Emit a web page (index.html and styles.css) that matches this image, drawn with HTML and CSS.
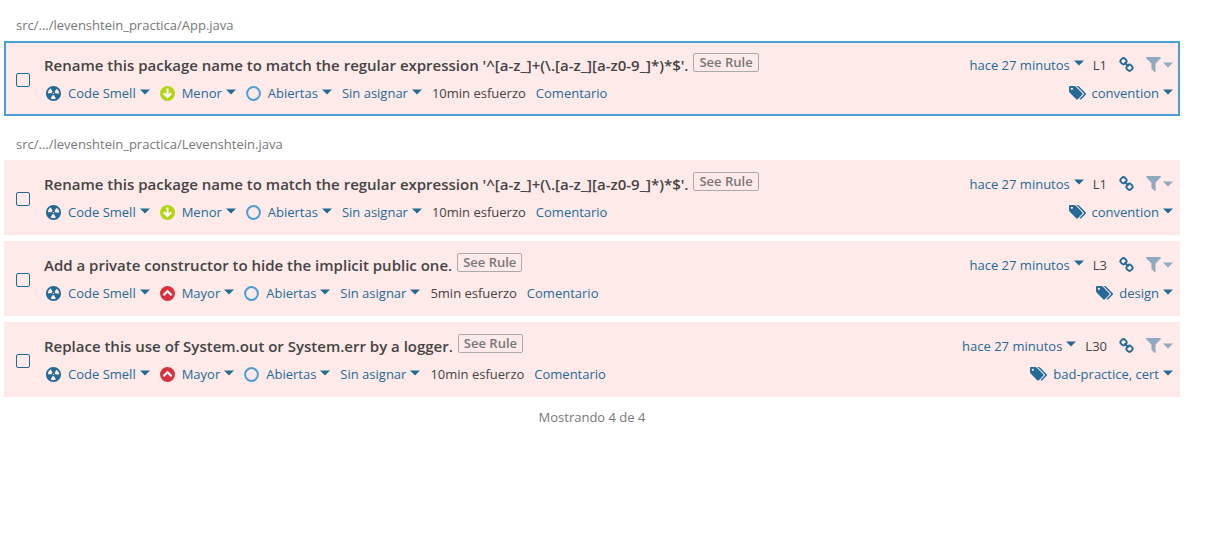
FILE: index.html
```html
<!DOCTYPE html>
<html lang="es">
<head>
<meta charset="utf-8">
<title>Issues</title>
<link rel="stylesheet" href="styles.css">
</head>
<body>
<svg class="sprite" aria-hidden="true">
  <symbol id="smell" viewBox="2 2 12 12"><path d="M8 2C4.7 2 2 4.7 2 8s2.7 6 6 6 6-2.7 6-6-2.7-6-6-6zm-.5 5.5h.9v.9h-.9v-.9zm-3.8.2c-.1 0-.2-.1-.2-.2 0-.4.1-1.2.6-2S5.300 4.200 5.600 4c.2 0 .3 0 .3.1l1.300 2.300c0 .1 0 .2-.1.2-.1.2-.2.3-.3.5-.1.2-.2.4-.2.5 0 .1-.1.2-.2.2l-2.700-.1zM9.900 12c-.3.2-1.100.5-2 .5-.9 0-1.700-.3-2-.5-.1 0-.1-.2-.1-.3l1.300-2.300c0-.1.1-.1.2-.1.2.1.3.1.5.1s.4 0 .5-.1c.1 0 .2 0 .2.1l1.300 2.300c.2.2.2.3.1.3zm2.500-4.100L9.700 8c-.1 0-.2-.1-.2-.2 0-.2-.1-.4-.2-.5 0-.1-.2-.3-.3-.4-.1 0-.1-.1-.1-.2l1.300-2.300c.1-.1.2-.1.3-.1.3.2 1 .7 1.500 1.500s.6 1.600.6 2c0 0-.1.1-.2.1z"/></symbol>
  <symbol id="minor" viewBox="0 0 15 15"><circle cx="7.500" cy="7.500" r="7.500" fill="#b0d513"/><path d="M7.500 2.500v8.500M3.800 7.300l3.700 3.700 3.700-3.700" fill="none" stroke="#fff" stroke-width="2"/></symbol>
  <symbol id="major" viewBox="0 0 15 15"><circle cx="7.500" cy="7.500" r="7.500" fill="#d4333f"/><path d="M3.400 9.300l4.100-4 4.100 4" fill="none" stroke="#fff" stroke-width="2.200"/></symbol>
  <symbol id="open" viewBox="0 0 15 15"><circle cx="7.500" cy="7.500" r="6.400" fill="none" stroke="#4b9fd5" stroke-width="2"/></symbol>
  <symbol id="caret" viewBox="0 0 10 6"><path d="M0 .5h10L5 5.500z"/></symbol>
  <symbol id="link" viewBox="0 0 16 16"><g fill="none" stroke="currentColor" stroke-width="2"><rect x="1.800" y="1.500" width="6" height="6" rx="2.400" transform="rotate(45 4.800 4.500)"/><rect x="8.200" y="8.500" width="6" height="6" rx="2.400" transform="rotate(45 11.200 11.500)"/><path d="M5.800 5.800l4.400 4.400"/></g></symbol>
  <symbol id="filter" viewBox="190 256 1412 1408"><path d="M1595 295q17 41-14 70l-493 493v742q0 42-39 59-13 5-25 5-27 0-45-19l-256-256q-19-19-19-45v-486l-493-493q-31-29-14-70 17-39 59-39h1280q42 0 59 39z"/></symbol>
  <symbol id="tags" viewBox="0 192 1899 1451"><path d="M448 448q0-53-37.500-90.500t-90.500-37.500-90.500 37.500-37.500 90.500 37.500 90.500 90.500 37.500 90.500-37.500 37.500-90.500zm1067 576q0 53-37 90l-491 492q-39 37-91 37-53 0-90-37l-715-716q-38-37-64.500-101t-26.500-117v-416q0-52 38-90t90-38h416q53 0 117 26.500t102 64.500l715 714q37 39 37 91zm384 0q0 53-37 90l-491 492q-39 37-91 37-36 0-59-14t-53-45l470-470q37-37 37-90 0-52-37-91l-715-714q-38-38-102-64.500t-117-26.500h224q53 0 117 26.500t102 64.500l715 714q37 39 37 91z"/></symbol>
</svg>
<main class="issues">
  <h2 class="path">src/.../levenshtein_practica/App.java</h2>
  <article class="issue selected">
    <input class="check" type="checkbox" aria-label="Rename this package name">
    <div class="body">
      <div class="row">
        <h3 class="title">Rename this package name to match the regular expression '^[a-z_]+(\.[a-z_][a-z0-9_]*)*$'.</h3>
        <button class="rule">See Rule</button>
        <div class="side">
          <button class="action">hace 27 minutos<svg class="caret"><use href="#caret"/></svg></button>
          <span class="line">L1</span>
          <a class="permalink" href="#" aria-label="Enlace"><svg class="icon"><use href="#link"/></svg></a>
          <button class="action filter" aria-label="Filtrar"><svg class="icon"><use href="#filter"/></svg><svg class="caret"><use href="#caret"/></svg></button>
        </div>
      </div>
      <div class="row meta">
        <button class="action"><svg class="icon"><use href="#smell"/></svg>Code Smell<svg class="caret"><use href="#caret"/></svg></button>
        <button class="action"><svg class="icon"><use href="#minor"/></svg>Menor<svg class="caret"><use href="#caret"/></svg></button>
        <button class="action"><svg class="icon"><use href="#open"/></svg>Abiertas<svg class="caret"><use href="#caret"/></svg></button>
        <button class="action">Sin asignar<svg class="caret"><use href="#caret"/></svg></button>
        <span class="effort">10min esfuerzo</span>
        <button class="action">Comentario</button>
        <div class="side"><button class="action"><svg class="icon tags"><use href="#tags"/></svg>convention<svg class="caret"><use href="#caret"/></svg></button></div>
      </div>
    </div>
  </article>

  <h2 class="path">src/.../levenshtein_practica/Levenshtein.java</h2>
  <article class="issue">
    <input class="check" type="checkbox" aria-label="Rename this package name">
    <div class="body">
      <div class="row">
        <h3 class="title">Rename this package name to match the regular expression '^[a-z_]+(\.[a-z_][a-z0-9_]*)*$'.</h3>
        <button class="rule">See Rule</button>
        <div class="side">
          <button class="action">hace 27 minutos<svg class="caret"><use href="#caret"/></svg></button>
          <span class="line">L1</span>
          <a class="permalink" href="#" aria-label="Enlace"><svg class="icon"><use href="#link"/></svg></a>
          <button class="action filter" aria-label="Filtrar"><svg class="icon"><use href="#filter"/></svg><svg class="caret"><use href="#caret"/></svg></button>
        </div>
      </div>
      <div class="row meta">
        <button class="action"><svg class="icon"><use href="#smell"/></svg>Code Smell<svg class="caret"><use href="#caret"/></svg></button>
        <button class="action"><svg class="icon"><use href="#minor"/></svg>Menor<svg class="caret"><use href="#caret"/></svg></button>
        <button class="action"><svg class="icon"><use href="#open"/></svg>Abiertas<svg class="caret"><use href="#caret"/></svg></button>
        <button class="action">Sin asignar<svg class="caret"><use href="#caret"/></svg></button>
        <span class="effort">10min esfuerzo</span>
        <button class="action">Comentario</button>
        <div class="side"><button class="action"><svg class="icon tags"><use href="#tags"/></svg>convention<svg class="caret"><use href="#caret"/></svg></button></div>
      </div>
    </div>
  </article>
  <article class="issue">
    <input class="check" type="checkbox" aria-label="Add a private constructor">
    <div class="body">
      <div class="row">
        <h3 class="title">Add a private constructor to hide the implicit public one.</h3>
        <button class="rule">See Rule</button>
        <div class="side">
          <button class="action">hace 27 minutos<svg class="caret"><use href="#caret"/></svg></button>
          <span class="line">L3</span>
          <a class="permalink" href="#" aria-label="Enlace"><svg class="icon"><use href="#link"/></svg></a>
          <button class="action filter" aria-label="Filtrar"><svg class="icon"><use href="#filter"/></svg><svg class="caret"><use href="#caret"/></svg></button>
        </div>
      </div>
      <div class="row meta">
        <button class="action"><svg class="icon"><use href="#smell"/></svg>Code Smell<svg class="caret"><use href="#caret"/></svg></button>
        <button class="action"><svg class="icon"><use href="#major"/></svg>Mayor<svg class="caret"><use href="#caret"/></svg></button>
        <button class="action"><svg class="icon"><use href="#open"/></svg>Abiertas<svg class="caret"><use href="#caret"/></svg></button>
        <button class="action">Sin asignar<svg class="caret"><use href="#caret"/></svg></button>
        <span class="effort">5min esfuerzo</span>
        <button class="action">Comentario</button>
        <div class="side"><button class="action"><svg class="icon tags"><use href="#tags"/></svg>design<svg class="caret"><use href="#caret"/></svg></button></div>
      </div>
    </div>
  </article>
  <article class="issue">
    <input class="check" type="checkbox" aria-label="Replace this use of System.out">
    <div class="body">
      <div class="row">
        <h3 class="title">Replace this use of System.out or System.err by a logger.</h3>
        <button class="rule">See Rule</button>
        <div class="side">
          <button class="action">hace 27 minutos<svg class="caret"><use href="#caret"/></svg></button>
          <span class="line">L30</span>
          <a class="permalink" href="#" aria-label="Enlace"><svg class="icon"><use href="#link"/></svg></a>
          <button class="action filter" aria-label="Filtrar"><svg class="icon"><use href="#filter"/></svg><svg class="caret"><use href="#caret"/></svg></button>
        </div>
      </div>
      <div class="row meta">
        <button class="action"><svg class="icon"><use href="#smell"/></svg>Code Smell<svg class="caret"><use href="#caret"/></svg></button>
        <button class="action"><svg class="icon"><use href="#major"/></svg>Mayor<svg class="caret"><use href="#caret"/></svg></button>
        <button class="action"><svg class="icon"><use href="#open"/></svg>Abiertas<svg class="caret"><use href="#caret"/></svg></button>
        <button class="action">Sin asignar<svg class="caret"><use href="#caret"/></svg></button>
        <span class="effort">10min esfuerzo</span>
        <button class="action">Comentario</button>
        <div class="side"><button class="action"><svg class="icon tags"><use href="#tags"/></svg>bad-practice, cert<svg class="caret"><use href="#caret"/></svg></button></div>
      </div>
    </div>
  </article>
  <p class="count">Mostrando 4 de 4</p>
</main>
</body>
</html>
```

FILE: styles.css
```css
* { box-sizing: border-box; }
body {
  margin: 0;
  background: #fff;
  color: #444;
  font: 13px/20px "Open Sans", "Noto Sans", sans-serif;
}
.sprite { display: none; }
.issues { padding: 9px 51px 0 4px; }
.path {
  margin: 0;
  padding: 6px 12px;
  color: #777;
  font-size: 13px;
  font-weight: 400;
  line-height: 20px;
}
.issue {
  display: flex;
  align-items: center;
  gap: 14px;
  margin-bottom: 6px;
  padding: 8px 5px 6px 10px;
  border: 2px solid #ffeaea;
  background: #ffeaea;
}
.issue.selected { border-color: #4b9fd5; margin-bottom: 12px; }
.check {
  appearance: none;
  flex: none;
  width: 14px;
  height: 14px;
  margin: 0;
  border: 1px solid #236a97;
  border-radius: 2px;
}
.check:checked { background: #236a97; }
.body { flex: 1; min-width: 0; }
.row { display: flex; align-items: center; height: 27px; }
.meta { gap: 10px; height: 30px; padding-left: 2px; }
.title { margin: 0; font-size: 15px; font-weight: 600; line-height: 24px; }
.rule {
  height: 19px;
  margin: 0 0 4px 5px;
  padding: 0 5px;
  border: 1px solid #aaa;
  border-radius: 2px;
  background: transparent;
  color: #777;
  font: 600 13px/17px "Open Sans", "Noto Sans", sans-serif;
}
.side { display: flex; align-items: center; margin-left: auto; white-space: nowrap; }
.action {
  display: flex;
  align-items: center;
  padding: 0;
  border: 0;
  background: transparent;
  color: #236a97;
  font: inherit;
  white-space: nowrap;
  cursor: pointer;
}
.icon { flex: none; width: 15px; height: 15px; margin-right: 7px; fill: currentColor; }
.tags { width: 17px; height: 14px; margin-right: 6px; }
.caret { flex: none; width: 10px; height: 6px; margin: 0 0 3px 4px; fill: currentColor; }
.line { margin: 0 12px 0 9px; }
.permalink { display: flex; margin-right: 5px; color: #236a97; }
.filter { opacity: .5; }
.filter .icon { margin-right: 0; }
.filter .caret { margin: 0 0 0 2px; }
.count { margin: 0; padding: 4px 0; color: #777; text-align: center; }
```
